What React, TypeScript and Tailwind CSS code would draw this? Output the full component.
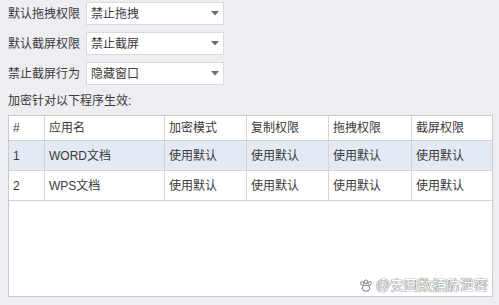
import React from "react";

const Arrow = () => (
  <svg width="8" height="5" viewBox="0 0 8 5" className="shrink-0">
    <path d="M0 0 L8 0 L4 4.5 Z" fill="#6b6b6b" />
  </svg>
);

const SelectRow = ({ label, value }: { label: string; value: string }) => (
  <div className="flex items-center h-[23px]">
    <div className="w-[78px] shrink-0 leading-none">{label}</div>
    <div className="flex items-center justify-between w-[138px] h-[23px] bg-white border border-[#d9d9de] pl-[4px] pr-[4px]">
      <span className="leading-none">{value}</span>
      <Arrow />
    </div>
  </div>
);

const cols = [36, 120, 82, 82, 83, 82];
const header = ["#", "应用名", "加密模式", "复制权限", "拖拽权限", "截屏权限"];
const rows = [
  ["1", "WORD文档", "使用默认", "使用默认", "使用默认", "使用默认"],
  ["2", "WPS文档", "使用默认", "使用默认", "使用默认", "使用默认"],
];

export default function App() {
  return (
    <div
      className="w-[499px] h-[305px] bg-[#eeedf2] pl-[8px] pt-[2px] text-[12px] text-[#3a3a3a]"
      style={{ fontFamily: '"Liberation Sans", "Noto Sans CJK SC", sans-serif' }}
    >
      <div className="flex flex-col gap-[7px]">
        <SelectRow label="默认拖拽权限" value="禁止拖拽" />
        <SelectRow label="默认截屏权限" value="禁止截屏" />
        <SelectRow label="禁止截屏行为" value="隐藏窗口" />
      </div>
      <div className="h-[30px] flex items-center leading-none pt-[1px]">加密针对以下程序生效:</div>
      <div className="relative w-[485px] h-[182px] bg-white border border-[#c9c9cc]">
        <div className="flex h-[25px] border-b border-[#d4d4d8]">
          {header.map((h, i) => (
            <div
              key={i}
              className={`flex items-center pl-[4px] shrink-0 ${i < 5 ? "border-r border-[#d4d4d8]" : ""}`}
              style={{ width: cols[i] }}
            >
              {h}
            </div>
          ))}
        </div>
        {rows.map((r, ri) => (
          <div
            key={ri}
            className={`flex h-[30px] border-b border-[#d4d4d8] ${ri === 0 ? "bg-[#e4eaf4]" : "bg-white"}`}
          >
            {r.map((c, i) => (
              <div
                key={i}
                className={`flex items-center pl-[4px] shrink-0 ${i < 5 ? "border-r border-[#d4d4d8]" : ""}`}
                style={{ width: cols[i] }}
              >
                {c}
              </div>
            ))}
          </div>
        ))}
        <div className="absolute right-[4px] bottom-[4px] flex items-center gap-[3px] text-[14px] text-white"
          style={{ textShadow: "0 0 1px #555, 0 0 1px #555" }}>
          <svg width="14" height="13" viewBox="0 0 13 12">
            <circle cx="3" cy="4" r="1.6" fill="white" stroke="#666" strokeWidth="0.8" />
            <circle cx="6.5" cy="2.5" r="1.6" fill="white" stroke="#666" strokeWidth="0.8" />
            <circle cx="10" cy="4" r="1.6" fill="white" stroke="#666" strokeWidth="0.8" />
            <ellipse cx="6.5" cy="8.5" rx="3.5" ry="2.8" fill="white" stroke="#666" strokeWidth="0.8" />
          </svg>
          <span className="leading-none">@安固数据防泄密</span>
        </div>
      </div>
    </div>
  );
}
